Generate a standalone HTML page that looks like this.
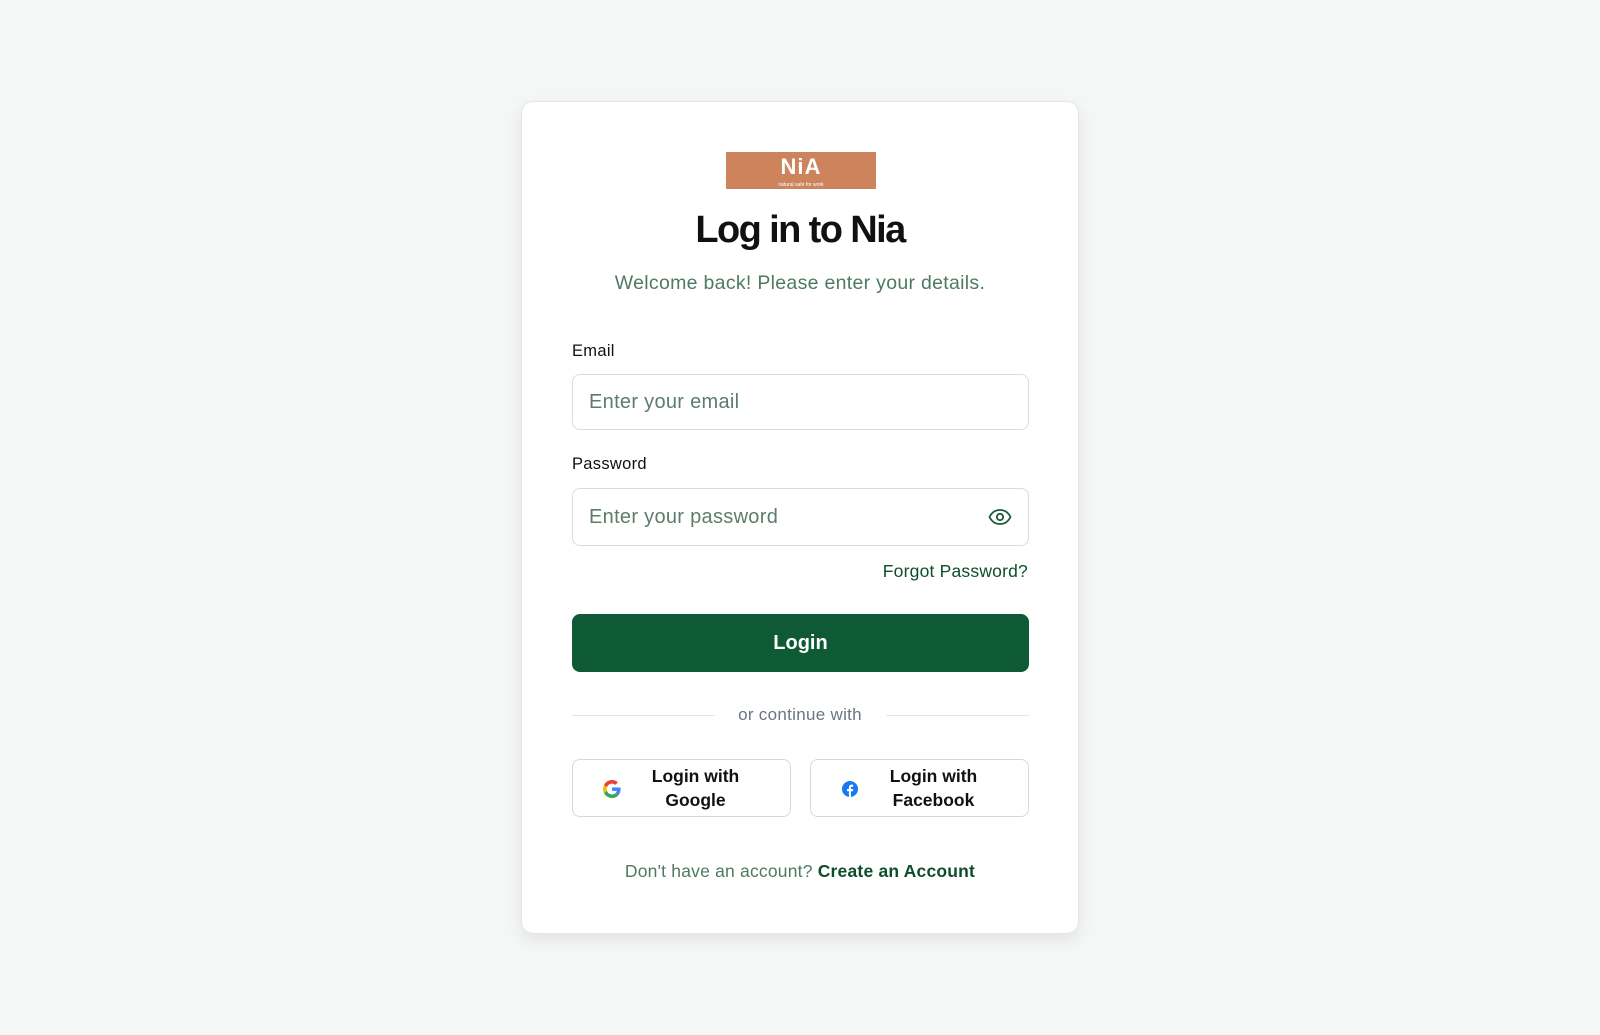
<!DOCTYPE html>
<html><head><style>
*{box-sizing:border-box;margin:0;padding:0}
body{width:1600px;height:1035px;background:#f5f7f6;font-family:"Liberation Sans",sans-serif;position:relative;overflow:hidden}
.card{position:absolute;left:521px;top:101px;width:558px;height:833px;background:#fff;border:1px solid #e3e6e5;border-radius:12px;box-shadow:0 6px 16px rgba(0,0,0,.08)}
.abs{position:absolute}
.logo{left:204px;top:50px;width:150px;height:37px;background:#cd835b;color:#fff;text-align:center;font-weight:bold;font-size:22px;line-height:30px;letter-spacing:1px}
.logo small{position:absolute;left:0;right:0;bottom:1px;font-size:5px;line-height:6px;font-weight:normal;letter-spacing:0}
h1{position:absolute;left:0;right:0;top:107px;text-align:center;font-size:38px;font-weight:bold;color:#111;letter-spacing:-1.6px}
.sub{left:0;right:0;top:170px;text-align:center;font-size:19.5px;color:#4f7a62;letter-spacing:0.3px}
.lbl{left:50px;font-size:16.5px;color:#111;letter-spacing:0.3px}
.inp{left:50px;width:457px;border:1px solid #d8dcdb;border-radius:8px;font-size:20px;color:#5d7d6a;padding-left:16px;display:flex;align-items:center;letter-spacing:0.3px}
.btn{left:50px;top:512px;width:457px;height:58px;background:#0d5a35;border-radius:8px;color:#fff;font-weight:bold;font-size:20px;display:flex;align-items:center;justify-content:center}
.soc{top:657px;width:219px;height:58px;border:1.5px solid #d5d9dc;border-radius:8px;font-weight:bold;font-size:17.5px;color:#111;text-align:center;line-height:24px}
</style></head><body>
<div class="card">
<div class="abs logo">NiA<small>natural safe for work</small></div>
<h1>Log in to Nia</h1>
<div class="abs sub">Welcome back! Please enter your details.</div>
<div class="abs lbl" style="top:240px">Email</div>
<div class="abs inp" style="top:272px;height:56px">Enter your email</div>
<div class="abs lbl" style="top:353px">Password</div>
<div class="abs inp" style="top:386px;height:58px">Enter your password
<svg class="abs" style="right:16px;top:18px" width="24" height="20" viewBox="0 0 24 20" fill="none" stroke="#1f5a3a" stroke-width="1.8"><path d="M1.5 10C4 5 8 3 12 3s8 2 10.5 7C20 15 16 17 12 17S4 15 1.5 10z"/><circle cx="12" cy="10" r="3.2"/></svg></div>
<div class="abs" style="right:50px;top:459px;font-size:17.5px;color:#0e4d2c;letter-spacing:0.2px">Forgot Password?</div>
<div class="abs btn">Login</div>
<div class="abs" style="left:50px;top:613px;width:143px;border-top:1px solid #e3e6e5"></div>
<div class="abs" style="left:364px;top:613px;width:143px;border-top:1px solid #e3e6e5"></div>
<div class="abs" style="left:0;right:0;top:603px;text-align:center;font-size:17px;color:#6b7480;letter-spacing:0.3px">or continue with</div>
<div class="abs soc" style="left:50px"><svg class="abs" style="left:30px;top:20px" width="18" height="18" viewBox="0 0 48 48"><path fill="#EA4335" d="M24 9.5c3.5 0 6.6 1.2 9 3.5l6.7-6.7C35.6 2.4 30.2 0 24 0 14.6 0 6.6 5.4 2.7 13.2l7.8 6.1C12.4 13.7 17.7 9.5 24 9.5z"/><path fill="#4285F4" d="M46.9 24.5c0-1.6-.1-3.1-.4-4.5H24v9h12.9c-.6 3-2.3 5.5-4.8 7.2l7.6 5.9c4.4-4.1 7.2-10.2 7.2-17.6z"/><path fill="#FBBC05" d="M10.5 28.7c-.5-1.5-.8-3-.8-4.7s.3-3.2.8-4.7l-7.8-6.1C1 16.6 0 20.2 0 24s1 7.4 2.7 10.8l7.8-6.1z"/><path fill="#34A853" d="M24 48c6.5 0 11.9-2.1 15.9-5.8l-7.6-5.9c-2.1 1.4-4.9 2.3-8.3 2.3-6.3 0-11.6-4.2-13.5-9.9l-7.8 6.1C6.6 42.6 14.6 48 24 48z"/></svg><div style="margin-left:28px;padding-top:4px">Login with<br>Google</div></div>
<div class="abs soc" style="left:288px"><svg class="abs" style="left:31px;top:21px" width="16" height="16" viewBox="0 0 16 16"><circle cx="8" cy="8" r="8" fill="#1877F2"/><path fill="#fff" d="M9 16V10.2h1.9l.3-2.2H9V6.7c0-.6.2-1 1.1-1h1.1V3.7c-.2 0-.9-.1-1.6-.1-1.6 0-2.7 1-2.7 2.8V8H5v2.2h1.9V16z"/></svg><div style="margin-left:28px;padding-top:4px">Login with<br>Facebook</div></div>
<div class="abs" style="left:0;right:0;top:759px;text-align:center;font-size:17.5px;color:#4f7a62;letter-spacing:0.2px">Don't have an account? <b style="color:#0e4d2c">Create an Account</b></div>
</div>
</body></html>
